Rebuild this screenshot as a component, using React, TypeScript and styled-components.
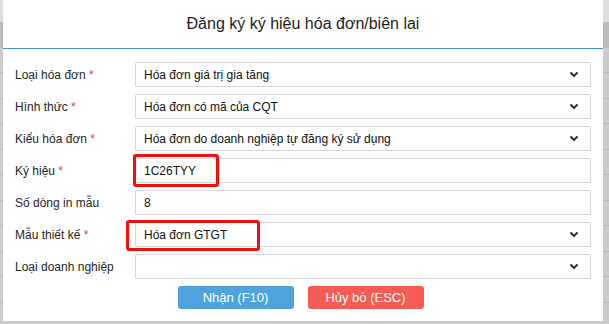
import React from "react";
import styled, { createGlobalStyle } from "styled-components";

const GlobalStyle = createGlobalStyle`
  html, body {
    margin: 0;
    padding: 0;
    width: 609px;
    height: 324px;
    overflow: hidden;
    background-color: #c9c9c9;
    font-family: Arial, "Liberation Sans", sans-serif;
  }
`;

type Field = {
  label: string;
  required?: boolean;
  value: string;
  select?: boolean;
  mark?: number;
};

const fields: Field[] = [
  { label: "Loại hóa đơn", required: true, value: "Hóa đơn giá trị gia tăng", select: true },
  { label: "Hình thức", required: true, value: "Hóa đơn có mã của CQT", select: true },
  { label: "Kiểu hóa đơn", required: true, value: "Hóa đơn do doanh nghiệp tự đăng ký sử dụng", select: true },
  { label: "Ký hiệu", required: true, value: "1C26TYY", mark: 86 },
  { label: "Số dòng in mẫu", value: "8" },
  { label: "Mẫu thiết kế", required: true, value: "Hóa đơn GTGT", select: true, mark: 134 },
  { label: "Loại doanh nghiệp", value: "", select: true },
];

const Chevron = () => (
  <svg width="10" height="7" viewBox="0 0 10 7">
    <path d="M1.5 1.5 L5 5 L8.5 1.5" fill="none" stroke="#222" strokeWidth="1.8" />
  </svg>
);

const App = () => {
  return (
    <Page>
      <GlobalStyle />
      <Dialog>
        <Header>Đăng ký ký hiệu hóa đơn/biên lai</Header>
        <Body>
          {fields.map((f) => (
            <Row key={f.label}>
              <Label>
                {f.label}
                {f.required && <Star> *</Star>}
              </Label>
              <Control>
                <Value>{f.value}</Value>
                {f.select && <Chevron />}
                {f.mark && <Mark style={{ width: f.mark }} $wide={f.mark > 100} />}
              </Control>
            </Row>
          ))}
          <Buttons>
            <Button $bg="#4fa3dd">Nhận (F10)</Button>
            <Button $bg="#f65c56">Hủy bỏ (ESC)</Button>
          </Buttons>
        </Body>
      </Dialog>
    </Page>
  );
};

export default App;

const Page = styled.div`
  width: 609px;
  height: 324px;
  padding: 0 6px 3px 3px;
  box-sizing: border-box;
  background:
    linear-gradient(to bottom, #dedede 0px, #dedede 22px, #bcbcbc 22px, #bcbcbc 48px, transparent 48px),
    repeating-linear-gradient(
      to bottom,
      #cbcbcb 0px,
      #cbcbcb 24.5px,
      #b9b9b9 24.5px,
      #b9b9b9 25.5px
    );
  background-position: 0 0, 0 48px;
`;
const Dialog = styled.div`
  width: 100%;
  height: 100%;
  background-color: #fff;
  display: flex;
  flex-direction: column;
`;
const Header = styled.div`
  height: 48px;
  border-bottom: 1px solid #4b92c4;
  display: flex;
  align-items: center;
  justify-content: center;
  font-size: 16px;
  color: #1e1e1e;
`;
const Body = styled.div`
  padding: 13px 12px 0 12px;
  display: flex;
  flex-direction: column;
  gap: 7px;
`;
const Row = styled.div`
  display: flex;
  align-items: center;
  height: 25px;
`;
const Label = styled.div`
  width: 120px;
  font-size: 12px;
  color: #262626;
`;
const Star = styled.span`
  color: #e03c3c;
`;
const Control = styled.div`
  position: relative;
  flex: 1;
  height: 25px;
  box-sizing: border-box;
  border: 1px solid #d6d6d6;
  border-radius: 2px;
  display: flex;
  align-items: center;
  justify-content: space-between;
  padding: 0 11px 0 8px;
`;
const Value = styled.span`
  font-size: 12px;
  color: #111;
`;
const Mark = styled.div<{ $wide: boolean }>`
  position: absolute;
  left: ${({ $wide }) => ($wide ? "-10px" : "-3px")};
  top: ${({ $wide }) => ($wide ? "-3px" : "-5px")};
  height: ${({ $wide }) => ($wide ? "31px" : "33px")};
  box-sizing: border-box;
  border: 3px solid #ee1111;
  border-radius: 3px;
`;
const Buttons = styled.div`
  display: flex;
  justify-content: center;
  gap: 14px;
  padding-right: 5px;
`;
const Button = styled.div<{ $bg: string }>`
  width: 116px;
  height: 23px;
  border-radius: 3px;
  background-color: ${({ $bg }) => $bg};
  color: #fff;
  font-size: 13px;
  display: flex;
  align-items: center;
  justify-content: center;
`;
